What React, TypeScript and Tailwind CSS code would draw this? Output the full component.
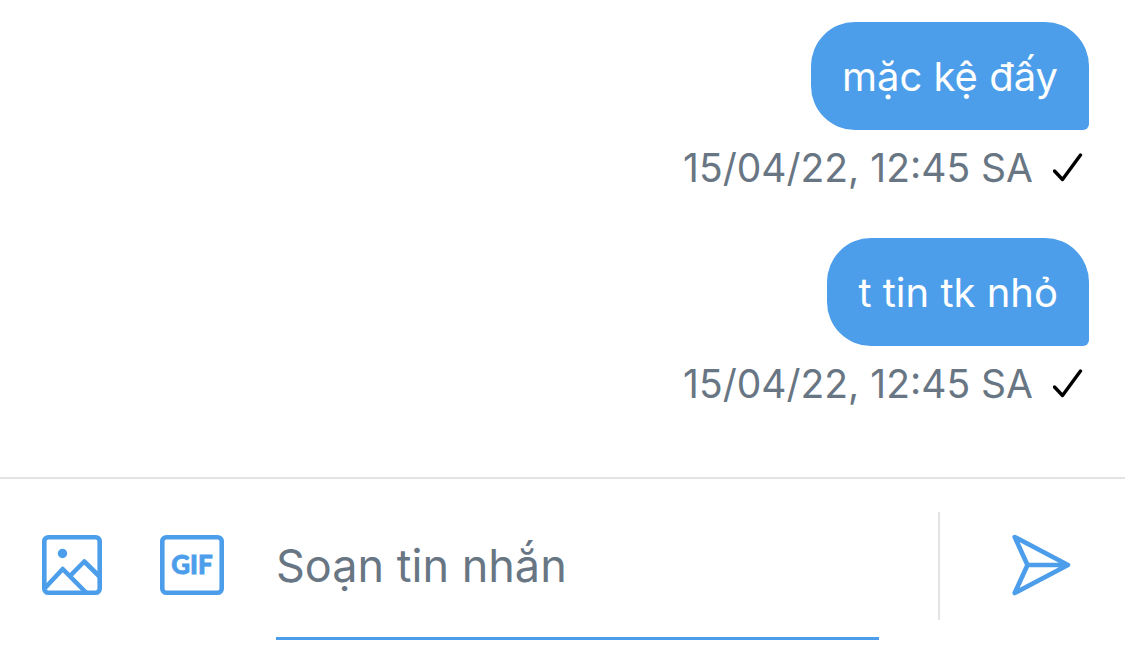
const messages = [
  { id: "1", text: "mặc kệ đấy", time: "15/04/22, 12:45 SA" },
  { id: "2", text: "t tin tk nhỏ", time: "15/04/22, 12:45 SA" },
]

function CheckIcon() {
  return (
    <svg width="30" height="30" viewBox="0 0 30 30" fill="none" stroke="currentColor" strokeWidth="3.4" strokeLinecap="round" strokeLinejoin="round">
      <path d="M1.5 18 L9.5 26.5 L27.5 2" />
    </svg>
  )
}

function ImageIcon() {
  return (
    <svg width="60" height="60" viewBox="0 0 60 60" fill="none" stroke="currentColor" strokeWidth="4.6" strokeLinejoin="round">
      <rect x="2.3" y="2.3" width="55.4" height="55.4" rx="4" />
      <circle cx="20.5" cy="18.5" r="4.7" fill="currentColor" stroke="none" />
      <path d="M3 53 L20.7 34 L44 57.5 M29 40 L42.3 26.5 L57.5 41.5" />
    </svg>
  )
}

function GifIcon() {
  return (
    <svg width="64" height="60" viewBox="0 0 64 60" fill="none" stroke="currentColor" strokeWidth="4.6">
      <rect x="2.3" y="2.3" width="59.4" height="55.4" rx="4" />
      <text x="32" y="39" textAnchor="middle" fill="currentColor" strokeWidth="0.8" className="font-['Lato',sans-serif] text-[26px] font-black">
        GIF
      </text>
    </svg>
  )
}

function SendIcon() {
  return (
    <svg width="60" height="62" viewBox="0 0 60 62" fill="none" stroke="currentColor" strokeWidth="4.6" strokeLinejoin="round">
      <path d="M3.7 3 L57 31 L3.7 59 L16.5 31 Z M16.5 31 H57" />
    </svg>
  )
}

export default function App() {
  return (
    <div className="flex min-h-screen flex-col bg-white font-['Inter',sans-serif] text-[#687684]">
      <main className="flex flex-1 flex-col items-end gap-[46px] border-b-2 border-[#e4e4e4] px-9 pt-[22px]">
        {messages.map((m) => (
          <div key={m.id} className="flex flex-col items-end">
            <p className="rounded-[44px] rounded-br-md bg-[#4c9eeb] px-[31px] pt-[31px] pb-[29px] text-[40px] leading-12 text-white">
              {m.text}
            </p>
            <div className="flex items-center gap-5 pt-3.5 pr-1.5">
              <time className="text-[39px] leading-12">{m.time}</time>
              <span className="text-black"><CheckIcon /></span>
            </div>
          </div>
        ))}
      </main>

      <form className="flex h-[172px] items-start" onSubmit={(e) => e.preventDefault()}>
        <button type="button" aria-label="Image" className="mt-14 ml-[42px] text-[#4c9eeb]">
          <ImageIcon />
        </button>
        <button type="button" aria-label="GIF" className="mt-14 ml-[58px] text-[#4c9eeb]">
          <GifIcon />
        </button>
        <input
          aria-label="Message"
          placeholder="Soạn tin nhắn"
          className="mt-3.5 ml-[52px] h-[147px] min-w-0 flex-1 border-b-3 border-[#4c9eeb] text-[45px] outline-none placeholder:text-[#687684]"
        />
        <div className="mt-[33px] ml-[59px] h-[108px] w-0.5 bg-[#e4e4e4]" />
        <button type="submit" aria-label="Send" className="mt-[55px] mr-[54px] ml-[71px] text-[#4c9eeb]">
          <SendIcon />
        </button>
      </form>
    </div>
  )
}
